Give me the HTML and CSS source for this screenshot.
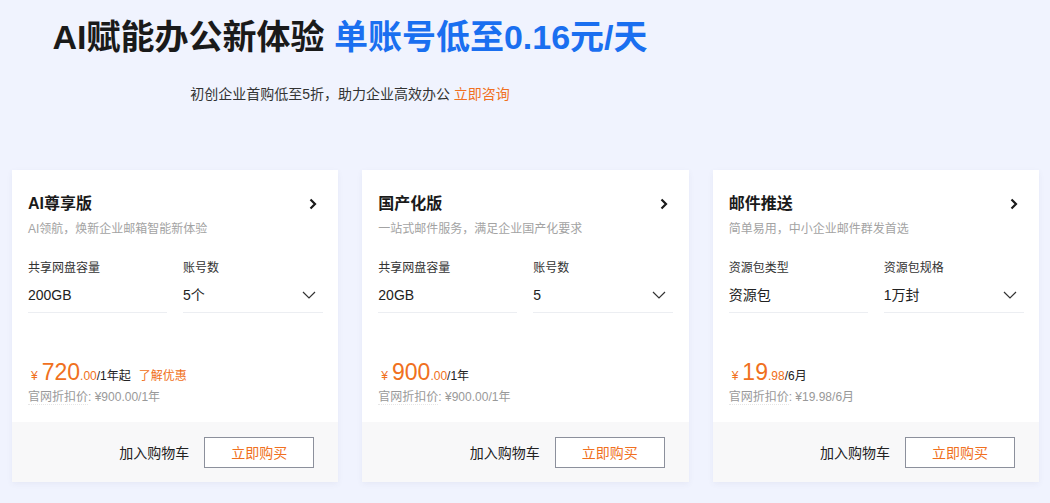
FILE: index.html
```html
<!DOCTYPE html>
<html lang="zh-CN">
<head>
<meta charset="utf-8">
<title>AI赋能办公新体验</title>
<link rel="stylesheet" href="styles.css">
</head>
<body>
<div class="page">
  <header class="hero">
    <h1 class="hero-title">AI赋能办公新体验 <span class="hero-blue">单账号低至0.16元/天</span></h1>
    <p class="hero-sub">初创企业首购低至5折，助力企业高效办公 <a class="link-orange" href="#">立即咨询</a></p>
  </header>

  <section class="cards">
    <div class="card">
      <div class="card-body">
        <div class="card-head">
          <h2 class="card-title">AI尊享版</h2>
          <svg class="chev-right" width="8" height="12" viewBox="0 0 8 12"><path d="M1.5 1.5 L6 6 L1.5 10.5" fill="none" stroke="#1a1a1a" stroke-width="2.2"/></svg>
        </div>
        <p class="card-desc">AI领航，焕新企业邮箱智能新体验</p>
        <div class="fields">
          <div class="field">
            <div class="field-label">共享网盘容量</div>
            <div class="field-value">200GB</div>
          </div>
          <div class="field">
            <div class="field-label">账号数</div>
            <div class="field-value select">5个<svg class="chev-down" width="14" height="8" viewBox="0 0 14 8"><path d="M1 1 L7 7 L13 1" fill="none" stroke="#333" stroke-width="1.2"/></svg></div>
          </div>
        </div>
        <div class="price-row">
          <span class="yen">¥</span><span class="price-int">720</span><span class="price-dec">.00</span><span class="price-unit">/1年起</span><a class="price-link" href="#">了解优惠</a>
        </div>
        <div class="orig"><span class="orig-label">官网折扣价</span>: ¥900.00/1年</div>
      </div>
      <div class="card-foot">
        <span class="cart">加入购物车</span>
        <button class="buy">立即购买</button>
      </div>
    </div>

    <div class="card">
      <div class="card-body">
        <div class="card-head">
          <h2 class="card-title">国产化版</h2>
          <svg class="chev-right" width="8" height="12" viewBox="0 0 8 12"><path d="M1.5 1.5 L6 6 L1.5 10.5" fill="none" stroke="#1a1a1a" stroke-width="2.2"/></svg>
        </div>
        <p class="card-desc">一站式邮件服务，满足企业国产化要求</p>
        <div class="fields">
          <div class="field">
            <div class="field-label">共享网盘容量</div>
            <div class="field-value">20GB</div>
          </div>
          <div class="field">
            <div class="field-label">账号数</div>
            <div class="field-value select">5<svg class="chev-down" width="14" height="8" viewBox="0 0 14 8"><path d="M1 1 L7 7 L13 1" fill="none" stroke="#333" stroke-width="1.2"/></svg></div>
          </div>
        </div>
        <div class="price-row">
          <span class="yen">¥</span><span class="price-int">900</span><span class="price-dec">.00</span><span class="price-unit">/1年</span>
        </div>
        <div class="orig"><span class="orig-label">官网折扣价</span>: ¥900.00/1年</div>
      </div>
      <div class="card-foot">
        <span class="cart">加入购物车</span>
        <button class="buy">立即购买</button>
      </div>
    </div>

    <div class="card">
      <div class="card-body">
        <div class="card-head">
          <h2 class="card-title">邮件推送</h2>
          <svg class="chev-right" width="8" height="12" viewBox="0 0 8 12"><path d="M1.5 1.5 L6 6 L1.5 10.5" fill="none" stroke="#1a1a1a" stroke-width="2.2"/></svg>
        </div>
        <p class="card-desc">简单易用，中小企业邮件群发首选</p>
        <div class="fields">
          <div class="field">
            <div class="field-label">资源包类型</div>
            <div class="field-value">资源包</div>
          </div>
          <div class="field">
            <div class="field-label">资源包规格</div>
            <div class="field-value select">1万封<svg class="chev-down" width="14" height="8" viewBox="0 0 14 8"><path d="M1 1 L7 7 L13 1" fill="none" stroke="#333" stroke-width="1.2"/></svg></div>
          </div>
        </div>
        <div class="price-row">
          <span class="yen">¥</span><span class="price-int">19</span><span class="price-dec">.98</span><span class="price-unit">/6月</span>
        </div>
        <div class="orig"><span class="orig-label">官网折扣价</span>: ¥19.98/6月</div>
      </div>
      <div class="card-foot">
        <span class="cart">加入购物车</span>
        <button class="buy">立即购买</button>
      </div>
    </div>
  </section>
</div>
</body>
</html>
```

FILE: styles.css
```css
* { box-sizing: border-box; }
html, body {
  margin: 0;
  padding: 0;
  background: #f0f3fe;
  font-family: "Liberation Sans", "Noto Sans CJK SC", sans-serif;
  color: #333;
}
.page {
  width: 1050px;
  height: 503px;
  overflow: hidden;
}
.hero {
  width: 700px;
  text-align: center;
  padding-top: 15px;
}
.hero-title {
  margin: 0;
  font-size: 34px;
  line-height: 44px;
  font-weight: 700;
  color: #1a1a1a;
}
.hero-blue { color: #1a6ff0; }
.hero-sub {
  margin: 25px 0 0;
  font-size: 14px;
  line-height: 20px;
  color: #333;
}
.link-orange {
  color: #f07020;
  text-decoration: none;
}
.cards {
  display: flex;
  gap: 24px;
  padding: 0 11px 0 12px;
  margin-top: 66px;
}
.card {
  flex: 1 1 0;
  min-width: 0;
  height: 312px;
  background: #fff;
  display: flex;
  flex-direction: column;
  box-shadow: 0 2px 6px rgba(60, 70, 120, 0.06);
}
.card-body {
  flex: 1;
  padding: 22px 16px 0;
}
.card-head {
  display: flex;
  justify-content: space-between;
  align-items: center;
  height: 24px;
}
.card-title {
  margin: 0;
  font-size: 16px;
  font-weight: 700;
  line-height: 24px;
  color: #1a1a1a;
}
.chev-right { margin-right: 5px; }
.card-desc {
  margin: 3px 0 0;
  font-size: 12px;
  line-height: 20px;
  color: #a3a3a3;
}
.fields {
  display: grid;
  grid-template-columns: 139px 140px;
  gap: 16px;
  margin-top: 19px;
}
.field-label {
  font-size: 12px;
  line-height: 20px;
  color: #333;
}
.field-value {
  margin-top: 7px;
  font-size: 14px;
  line-height: 20px;
  padding-bottom: 7px;
  border-bottom: 1px solid #eceef2;
  color: #222;
}
.field-value.select {
  display: flex;
  justify-content: space-between;
  align-items: center;
}
.chev-down { margin-right: 7px; }
.price-row {
  margin-top: 44px;
  height: 30px;
  display: flex;
  align-items: baseline;
  padding-left: 3px;
  line-height: 30px;
}
.yen {
  font-size: 12px;
  color: #f07020;
  margin-right: 4px;
}
.price-int {
  font-size: 23px;
  color: #f07020;
}
.price-dec {
  font-size: 12px;
  color: #f07020;
}
.price-unit {
  font-size: 12px;
  color: #222;
}
.price-link {
  font-size: 12px;
  color: #f07020;
  text-decoration: none;
  margin-left: 8px;
}
.orig {
  font-size: 12px;
  line-height: 20px;
  color: #999;
}
.orig-label {
  border-bottom: 1px dotted #e6e6e6;
}
.card-foot {
  height: 60px;
  background: #f8f8f9;
  display: flex;
  justify-content: flex-end;
  align-items: center;
  padding-right: 24px;
}
.cart {
  font-size: 14px;
  color: #222;
  margin-right: 15px;
}
.buy {
  width: 110px;
  height: 31px;
  background: #fff;
  border: 1px solid #8c909c;
  color: #f07020;
  font-size: 14px;
  font-family: inherit;
  padding: 0;
  cursor: pointer;
}
```
